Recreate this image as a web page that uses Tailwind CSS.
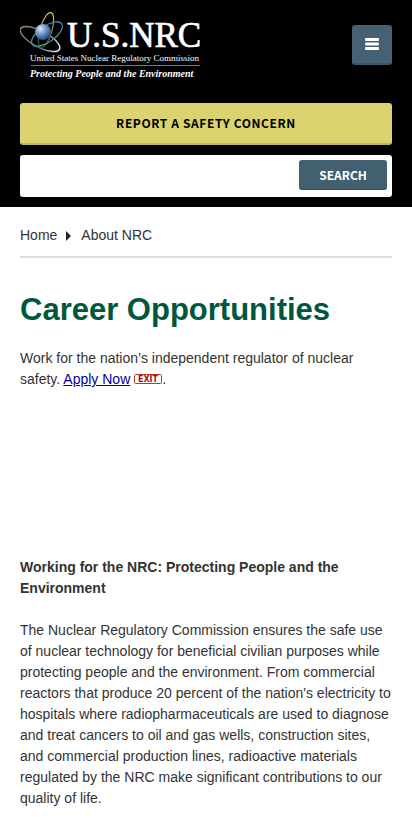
<!DOCTYPE html>
<html lang="en">
<head>
<meta charset="utf-8">
<meta name="viewport" content="width=device-width, initial-scale=1">
<title>Career Opportunities | NRC</title>
<script src="https://cdn.jsdelivr.net/npm/@tailwindcss/browser@4"></script>
</head>
<body class="bg-white font-['Liberation_Sans',Arial,sans-serif] text-sm/[21px] text-[#333]">
<header class="bg-black px-5 pb-[10px]">
  <div class="flex items-start justify-between pt-[10px]">
    <a href="#" aria-label="U.S. NRC home" class="block">
      <svg width="182" height="72" viewBox="0 0 182 72" fill="none">
        <defs>
          <radialGradient id="core" cx=".35" cy=".3" r=".75">
            <stop offset="0" stop-color="#dceaf8"/>
            <stop offset=".4" stop-color="#7ba2d0"/>
            <stop offset="1" stop-color="#1d4175"/>
          </radialGradient>
          <linearGradient id="gold" x1="0" y1="0" x2="0" y2="1">
            <stop offset="0" stop-color="#e0cd65"/>
            <stop offset=".5" stop-color="#8b913f"/>
            <stop offset="1" stop-color="#234f43"/>
          </linearGradient>
          <linearGradient id="rust" x1="0" y1="0" x2="1" y2="0">
            <stop offset="0" stop-color="#a58779"/>
            <stop offset=".55" stop-color="#4c6788"/>
            <stop offset="1" stop-color="#eceeef"/>
          </linearGradient>
          <linearGradient id="teal" x1="0" y1="1" x2="1" y2="0">
            <stop offset="0" stop-color="#4b9c8c"/>
            <stop offset="1" stop-color="#4d76a5"/>
          </linearGradient>
        </defs>
        <ellipse cx="20" cy="29" rx="22" ry="8" transform="rotate(28 20 29)" stroke="url(#rust)" stroke-width="1.4"/>
        <ellipse cx="26" cy="20" rx="6" ry="18" transform="rotate(16 26 20)" stroke="url(#gold)" stroke-width="1.2"/>
        <ellipse cx="27" cy="24" rx="18" ry="8" transform="rotate(-35 27 24)" stroke="url(#teal)" stroke-width="1.3"/>
        <circle cx="23" cy="22" r="8" fill="url(#core)"/>
        <g fill="#fff" font-family="'Liberation Serif', serif">
          <text x="47" y="37" font-size="35" stroke="#fff" stroke-width=".7">U.S.NRC</text>
          <text x="10" y="51" font-size="9">United States Nuclear Regulatory Commission</text>
          <text x="10" y="67" font-size="10" font-weight="700" font-style="italic">Protecting People and the Environment</text>
        </g>
        <path d="M11 55.5H180" stroke="#777"/>
      </svg>
    </a>
    <button type="button" aria-label="Menu" class="mt-[15px] flex size-10 items-center justify-center rounded-[3px] border-b-2 border-[#3c5868] bg-[#456173]">
      <svg width="14" height="12" viewBox="0 0 14 12" fill="#fff"><rect width="14" height="3" rx="1"/><rect y="4.5" width="14" height="3" rx="1"/><rect y="9" width="14" height="3" rx="1"/></svg>
    </button>
  </div>
  <button type="button" class="mt-[21px] flex h-[42px] w-full items-center justify-center rounded-[3px] border-b-2 border-[#bdb65e] bg-[#dad370] font-['Noto_Sans_CJK_SC',sans-serif] text-xs font-bold tracking-wider text-black">REPORT A SAFETY CONCERN</button>
  <form class="mt-[10px] flex h-[42px] items-start rounded-[3px] bg-white p-[5px]">
    <input type="search" aria-label="Search" class="h-8 min-w-0 flex-1 px-2 outline-none">
    <button type="button" class="flex h-[30px] w-[88px] items-center justify-center rounded-[3px] border-b border-[#34505f] bg-[#426070] font-['Noto_Sans_CJK_SC',sans-serif] text-xs font-bold text-white">SEARCH</button>
  </form>
</header>
<main class="px-5">
  <nav aria-label="Breadcrumb" class="flex items-center border-b-2 border-[#ddd] pt-[18px] pb-[10px]">
    <a href="#">Home</a>
    <svg class="mr-[10px] ml-[9px]" width="5" height="10" viewBox="0 0 5 10" fill="#222"><path d="M0 0L5 5L0 10Z"/></svg>
    <a href="#">About NRC</a>
  </nav>
  <h1 class="mt-[33px] text-[31px]/[38px] font-bold text-[#00573d]">Career Opportunities</h1>
  <p class="mt-[19px]">Work for the nation’s independent regulator of nuclear safety. <a href="#" class="text-[#0000a0] underline">Apply Now</a> <a href="#" aria-label="Exit" class="inline-block"><svg width="28" height="10" viewBox="0 0 28 10" fill="none"><rect x=".5" y=".5" width="27" height="9" rx="1" stroke="#b33"/><text x="14" y="8" text-anchor="middle" font-family="'DejaVu Sans', sans-serif" font-size="8" font-weight="700" fill="#a11">EXIT</text></svg></a>.</p>
  <h2 class="mt-[167px] font-bold">Working for the NRC: Protecting People and the Environment</h2>
  <p class="mt-[21px] pb-4">The Nuclear Regulatory Commission ensures the safe use of nuclear technology for beneficial civilian purposes while protecting people and the environment. From commercial reactors that produce 20 percent of the nation's electricity to hospitals where radiopharmaceuticals are used to diagnose and treat cancers to oil and gas wells, construction sites, and commercial production lines, radioactive materials regulated by the NRC make significant contributions to our quality of life.</p>
</main>
</body>
</html>
